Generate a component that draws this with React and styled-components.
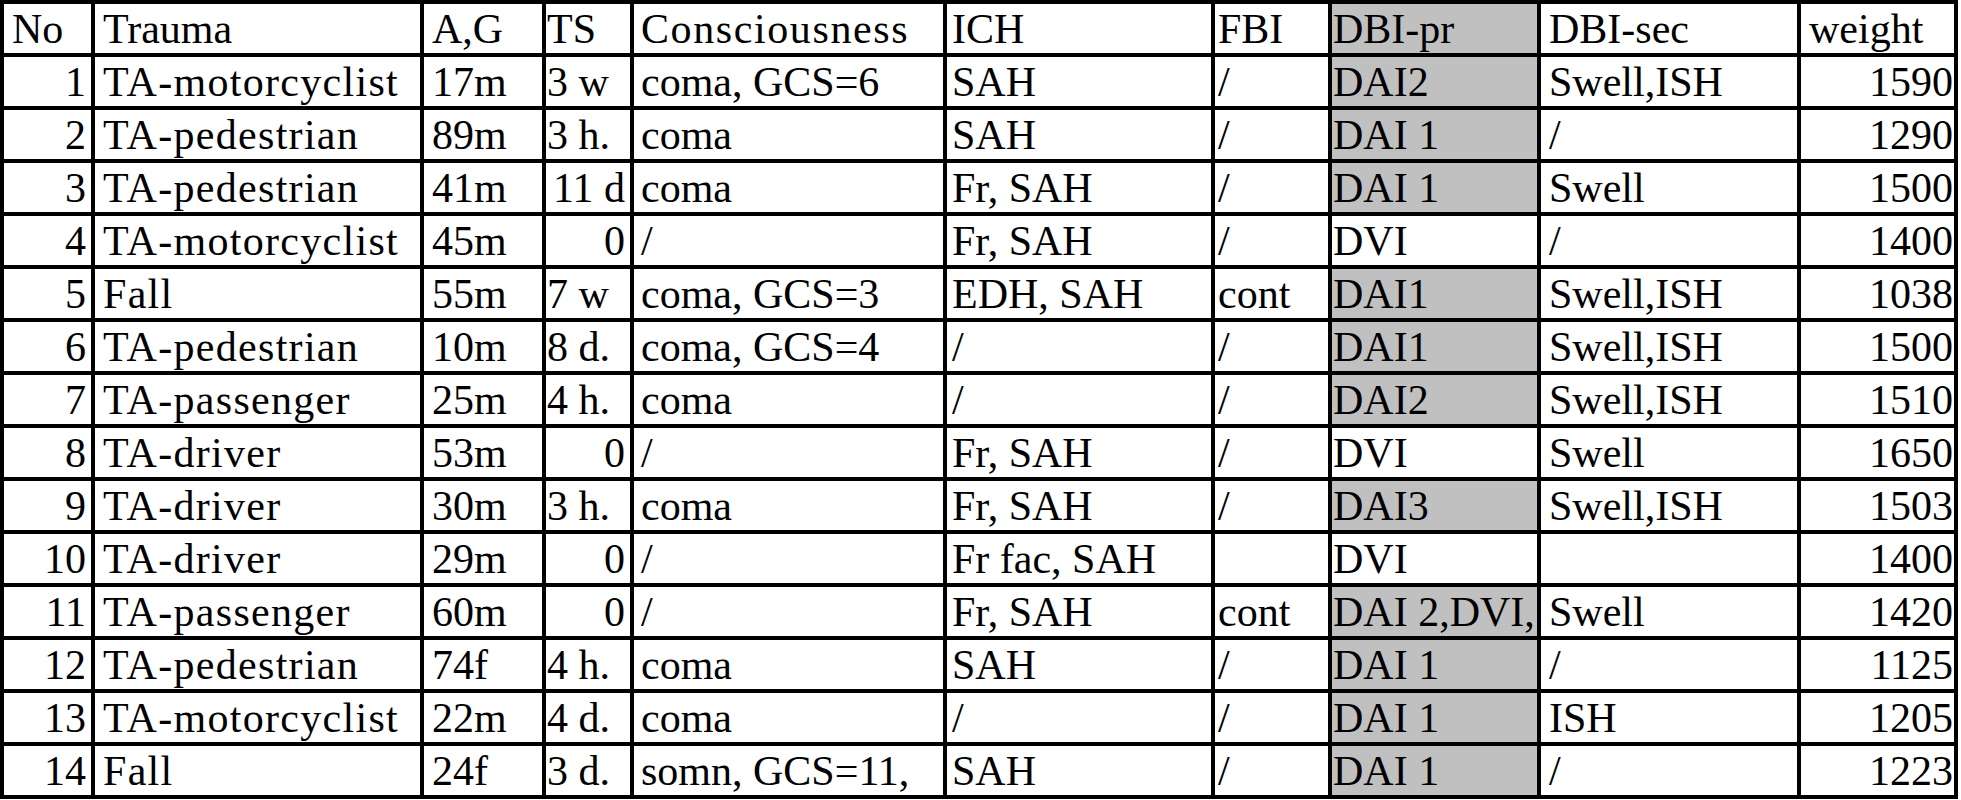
import React from "react";
import styled, { createGlobalStyle } from "styled-components";

const Global = createGlobalStyle`
  html, body { margin: 0; padding: 0; background: #ffffff; }
  body { font-family: "Liberation Serif", "Times New Roman", serif; color: #000; }
`;

const columns = [
  { key: "no", title: "No", width: 87, align: "right", padL: 8, padR: 5 },
  { key: "trauma", title: "Trauma", width: 325, padL: 8, spacing: 1.3 },
  { key: "ag", title: "A,G", width: 118, padL: 8 },
  { key: "ts", title: "TS", width: 84, padL: 1, padR: 5 },
  { key: "cons", title: "Consciousness", width: 309, padL: 7, headSpacing: 1.6 },
  { key: "ich", title: "ICH", width: 264, padL: 5 },
  { key: "fbi", title: "FBI", width: 113, padL: 3 },
  { key: "dbipr", title: "DBI-pr", width: 205, padL: 1, shaded: true },
  { key: "dbisec", title: "DBI-sec", width: 256, padL: 8 },
  { key: "weight", title: "weight", width: 153, align: "right", padL: 8, padR: 1 },
];

const rows = [
  ["1", "TA-motorcyclist", "17m", "3 w", "coma, GCS=6", "SAH", "/", "DAI2", "Swell,ISH", "1590"],
  ["2", "TA-pedestrian", "89m", "3 h.", "coma", "SAH", "/", "DAI 1", "/", "1290"],
  ["3", "TA-pedestrian", "41m", "11 d", "coma", "Fr, SAH", "/", "DAI 1", "Swell", "1500"],
  ["4", "TA-motorcyclist", "45m", "0", "/", "Fr, SAH", "/", "DVI", "/", "1400"],
  ["5", "Fall", "55m", "7 w", "coma, GCS=3", "EDH, SAH", "cont", "DAI1", "Swell,ISH", "1038"],
  ["6", "TA-pedestrian", "10m", "8 d.", "coma, GCS=4", "/", "/", "DAI1", "Swell,ISH", "1500"],
  ["7", "TA-passenger", "25m", "4 h.", "coma", "/", "/", "DAI2", "Swell,ISH", "1510"],
  ["8", "TA-driver", "53m", "0", "/", "Fr, SAH", "/", "DVI", "Swell", "1650"],
  ["9", "TA-driver", "30m", "3 h.", "coma", "Fr, SAH", "/", "DAI3", "Swell,ISH", "1503"],
  ["10", "TA-driver", "29m", "0", "/", "Fr fac, SAH", "", "DVI", "", "1400"],
  ["11", "TA-passenger", "60m", "0", "/", "Fr, SAH", "cont", "DAI 2,DVI,", "Swell", "1420"],
  ["12", "TA-pedestrian", "74f", "4 h.", "coma", "SAH", "/", "DAI 1", "/", "1125"],
  ["13", "TA-motorcyclist", "22m", "4 d.", "coma", "/", "/", "DAI 1", "ISH", "1205"],
  ["14", "Fall", "24f", "3 d.", "somn, GCS=11,", "SAH", "/", "DAI 1", "/", "1223"],
];

const Table = styled.div`
  display: grid;
  grid-template-columns: ${(p) => p.$cols};
  grid-auto-rows: 49px;
  gap: 4px;
  padding: 4px;
  width: max-content;
  background: #000000;
`;

const Cell = styled.div`
  background: ${(p) => (p.$shaded ? "#c0c0c0" : "#ffffff")};
  font-size: 42px;
  line-height: 47px;
  padding: 2px ${(p) => p.$padR}px 0 ${(p) => p.$padL}px;
  text-align: ${(p) => p.$align};
  letter-spacing: ${(p) => p.$spacing}px;
  white-space: nowrap;
  overflow: hidden;
`;

const isNumber = (v) => /^\d+$/.test(v) || v === "11 d";

export default function App() {
  const cols = columns.map((c) => `${c.width}px`).join(" ");
  return (
    <>
      <Global />
      <Table $cols={cols}>
        {columns.map((c) => (
          <Cell
            key={`h-${c.key}`}
            $shaded={c.shaded}
            $align="left"
            $padL={c.padL}
            $padR={c.padR || 0}
            $spacing={c.headSpacing || 0}
          >
            {c.title}
          </Cell>
        ))}
        {rows.map((r, ri) =>
          r.map((v, ci) => {
            const c = columns[ci];
            const shaded = c.shaded && !v.startsWith("DVI");
            const align = c.align === "right" || (c.key === "ts" && isNumber(v)) ? "right" : "left";
            return (
              <Cell
                key={`${ri}-${ci}`}
                $shaded={shaded}
                $align={align}
                $padL={c.padL}
                $padR={c.padR || 0}
                $spacing={c.spacing || 0}
              >
                {v}
              </Cell>
            );
          })
        )}
      </Table>
    </>
  );
}
